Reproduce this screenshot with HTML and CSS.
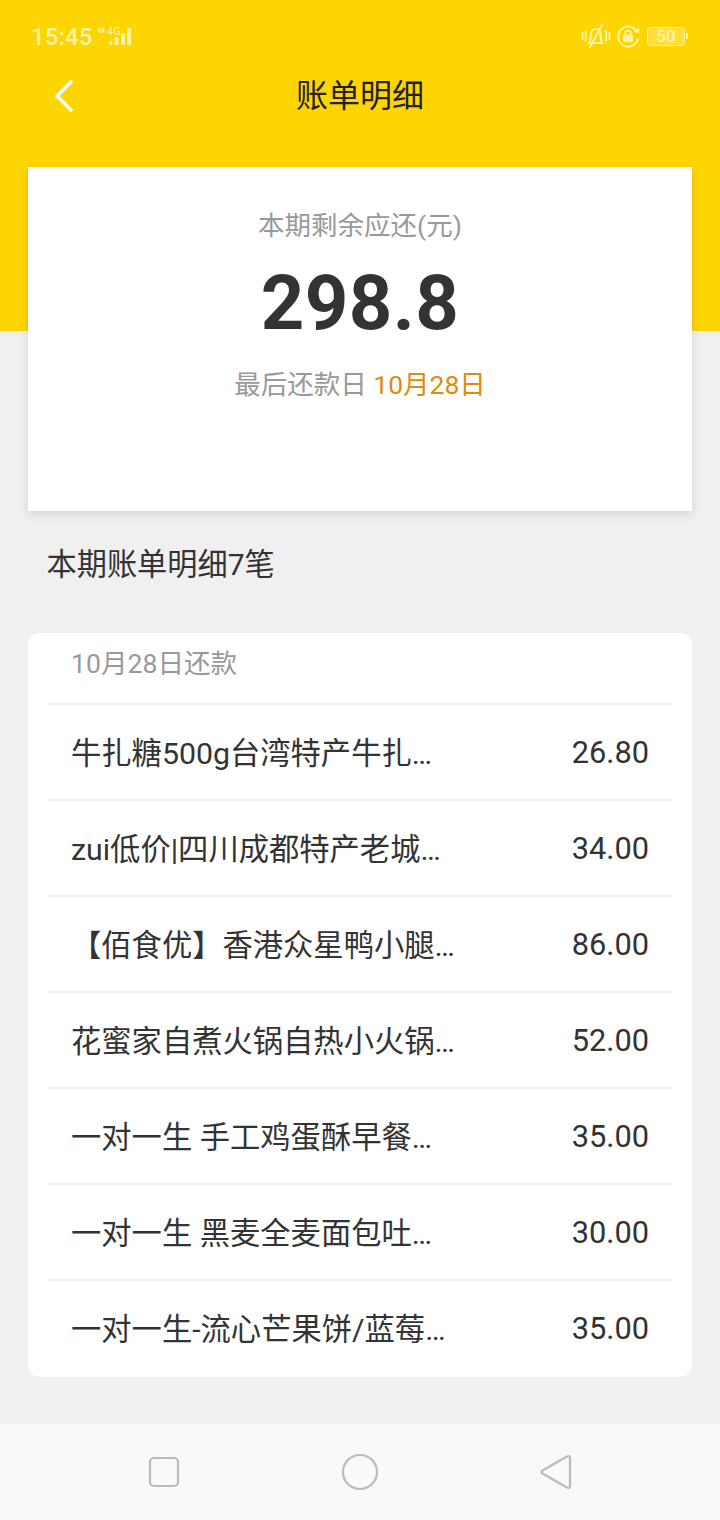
FILE: index.html
```html
<!DOCTYPE html>
<html lang="zh">
<head>
<meta charset="utf-8">
<title>账单明细</title>
<link rel="stylesheet" href="styles.css">
</head>
<body>
<div class="screen">
  <header class="hero">
    <div class="status">
      <div class="status-left">
        <span class="clock">15:45</span>
        <svg class="net" width="36" height="23" viewBox="0 -3 36 23">
          <path d="M0 3.500 L3.500 0 V6.500 Z M4.800 0 L8.300 3.500 L4.800 6.500 Z" fill="#fff3a8"/>
          <text x="10" y="8" class="net-label">4G</text>
          <rect x="12" y="14" width="3.400" height="4" rx="1.700" fill="#fff3a8"/>
          <rect x="17.500" y="10" width="4" height="8" rx="1" fill="#fff3a8"/>
          <rect x="24" y="6" width="4" height="12" rx="1" fill="#fff3a8"/>
          <rect x="30" y="1" width="4" height="17" rx="1" fill="#fff3a8"/>
        </svg>
      </div>
      <div class="status-right">
        <svg width="30" height="24" viewBox="0 0 30 24" fill="none" stroke="#fff3a8" stroke-width="2" stroke-linecap="round">
          <path d="M1.500 9 V15 M4.800 7 V17 M25.200 7 V17 M28.500 9 V15"/>
          <path d="M8 19 H21.500 C19.500 16.500 19.500 14 19.500 11 C19.500 7 17.500 5 14.500 5 C11.500 5 9.800 7.500 9.800 11 C9.800 14 10 16.500 8 19 Z"/>
          <path d="M9 23 L21 1"/>
        </svg>
        <svg width="24" height="24" viewBox="0 0 24 24" fill="none" stroke="#fff3a8" stroke-width="2">
          <path d="M20.500 7 A10 10 0 1 0 22 14.500"/>
          <path d="M17.800 7.500 L23 9.500 L23 3.500 Z" fill="#fff3a8" stroke="none"/>
          <rect x="7" y="10.500" width="10" height="7.500" rx="1" fill="#fff3a8" stroke="none"/>
          <path d="M9.300 11 V9 C9.300 5.800 14.700 5.800 14.700 9 V11" stroke-width="1.600"/>
        </svg>
        <div class="battery"><span class="battery-body">50</span><span class="battery-tip"></span></div>
      </div>
    </div>
    <div class="titlebar">
      <svg class="back" width="20" height="34" viewBox="0 0 20 34" fill="none" stroke="#fff" stroke-width="3.600" stroke-linecap="round" stroke-linejoin="round">
        <path d="M17 3 L3 17 L17 31"/>
      </svg>
      <h1 class="title">账单明细</h1>
    </div>
  </header>

  <main class="content">
    <section class="summary">
      <p class="summary-label">本期剩余应还(元)</p>
      <p class="summary-amount">298.8</p>
      <p class="summary-date">最后还款日 <span class="accent">10月28日</span></p>
    </section>

    <h2 class="count">本期账单明细7笔</h2>

    <section class="bill">
      <div class="bill-date">10月28日还款</div>
      <div class="row"><span class="row-name">牛扎糖500g台湾特产牛扎…</span><span class="row-price">26.80</span></div>
      <div class="row"><span class="row-name">zui低价|四川成都特产老城…</span><span class="row-price">34.00</span></div>
      <div class="row"><span class="row-name bracket">【佰食优】香港众星鸭小腿…</span><span class="row-price">86.00</span></div>
      <div class="row"><span class="row-name">花蜜家自煮火锅自热小火锅…</span><span class="row-price">52.00</span></div>
      <div class="row"><span class="row-name">一对一生 手工鸡蛋酥早餐…</span><span class="row-price">35.00</span></div>
      <div class="row"><span class="row-name">一对一生 黑麦全麦面包吐…</span><span class="row-price">30.00</span></div>
      <div class="row"><span class="row-name">一对一生-流心芒果饼/蓝莓…</span><span class="row-price">35.00</span></div>
    </section>
  </main>

  <nav class="navbar">
    <svg width="32" height="32" viewBox="0 0 32 32" fill="none" stroke="#bbb" stroke-width="2.200"><rect x="2" y="2" width="28" height="28" rx="4"/></svg>
    <svg width="38" height="38" viewBox="0 0 38 38" fill="none" stroke="#bbb" stroke-width="2.200"><circle cx="19" cy="19" r="17"/></svg>
    <svg width="34" height="38" viewBox="0 0 34 38" fill="none" stroke="#bbb" stroke-width="2.200" stroke-linejoin="round"><path d="M3.500 17.500 L28 3.500 Q31 2 31 5 V33 Q31 36 28 34.500 L3.500 20.500 Q1.500 19 3.500 17.500 Z"/></svg>
  </nav>
</div>
</body>
</html>
```

FILE: styles.css
```css
* { box-sizing: border-box; margin: 0; padding: 0; }
html, body { width: 720px; height: 1520px; overflow: hidden; }
body { background: #f0f0f0; font-family: Roboto, "Noto Sans CJK SC", sans-serif; color: #333; }
.screen { width: 720px; height: 1520px; display: flex; flex-direction: column; }

.hero { background: #ffd500; height: 331px; flex: none; }
.status { height: 74px; padding: 23px 32px 0 31px; display: flex; justify-content: space-between; align-items: flex-start; }
.status-left { display: flex; align-items: flex-start; gap: 5px; }
.clock { font-size: 24px; line-height: 28px; font-weight: 500; color: #fff3a8; letter-spacing: 0.1px; }
.net { margin-top: 1px; }
.net-label { font-size: 11px; fill: #fff3a8; font-family: Roboto, sans-serif; }
.status-right { display: flex; align-items: center; gap: 5px; height: 26px; margin-top: 0; }
.battery { display: flex; align-items: center; gap: 1px; margin-left: 2px; }
.battery-body { width: 38px; height: 19px; border: 1.500px solid #fff3a8; border-radius: 4px; background: rgba(255, 243, 168, 0.35); color: #fff3a8; font-size: 17px; font-weight: 500; line-height: 16px; text-align: center; }
.battery-tip { width: 2px; height: 6px; background: #fff3a8; border-radius: 1px; }

.titlebar { height: 44px; display: flex; align-items: center; justify-content: center; position: relative; }
.back { position: absolute; left: 54px; top: 5px; }
.title { font-size: 32px; font-weight: 400; color: #222; line-height: 44px; }

.content { flex: 1; padding: 0 28px; margin-top: -164px; }
.summary { height: 344px; background: #fff; box-shadow: 0 3px 10px rgba(0, 0, 0, 0.12); padding-top: 41px; text-align: center; }
.summary-label { font-size: 26.500px; line-height: 36px; color: #999; }
.summary-amount { font-size: 76px; font-weight: 700; line-height: 88px; margin-top: 15px; color: #333; letter-spacing: 0.4px; }
.summary-date { font-size: 26.500px; line-height: 36px; color: #999; margin-top: 20px; }
.accent { color: #e08a10; }

.count { font-size: 30.200px; font-weight: 400; line-height: 40px; color: #333; padding: 34px 0 0 18.500px; height: 122px; }

.bill { background: #fff; border-radius: 12px; padding: 0 20px; height: 744px; }
.bill-date { height: 70px; padding: 12px 0 0 23px; font-size: 26.600px; line-height: 38px; color: #999; }
.row { height: 96px; border-top: 2px solid #eee; display: flex; justify-content: space-between; align-items: center; padding: 0 23px 2px 23px; font-size: 30.300px; color: #333; }
.row-name { white-space: nowrap; }
.row-price { font-size: 30.800px; padding-top: 2px; }

.navbar { height: 96px; flex: none; background: #f9f9f9; display: flex; align-items: center; justify-content: space-between; padding: 0 147px 0 148px; }
```
